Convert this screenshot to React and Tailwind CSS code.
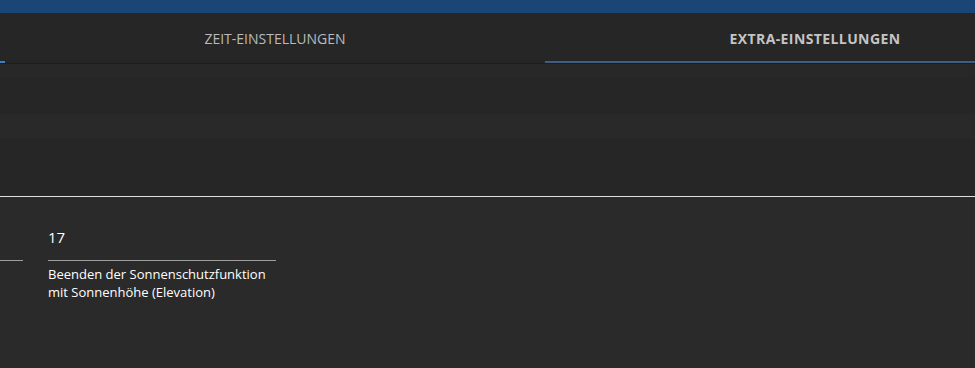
import React from "react";

const tabs = [
  { label: "", active: false, edge: true },
  { label: "ZEIT-EINSTELLUNGEN", active: false },
  { label: "EXTRA-EINSTELLUNGEN", active: true },
];

const App = () => {
  return (
    <div className="min-h-[368px] w-[975px] overflow-hidden bg-[#2a2a2a] font-['Open_Sans',sans-serif]">
      {/* Top bar */}
      <div className="h-[13px] bg-[#1a4577]" />

      {/* Tabs */}
      <div className="flex h-[51px] overflow-hidden border-b border-[#1d1d1d] bg-[#262626]">
        <div className="-ml-[535px] flex shrink-0">
          {tabs.map((tab, idx) => (
            <div
              key={idx}
              className={`flex h-[50px] w-[540px] shrink-0 items-center justify-center border-b-2 pt-[2px] text-[14px] ${
                tab.active
                  ? "border-[#3e5d82] font-bold tracking-[0.4px] text-[#c4c4c4]"
                  : tab.edge
                  ? "border-[#3b7fc4] font-medium text-[#b8b8b8]"
                  : "border-transparent font-medium text-[#bababa]"
              }`}
            >
              {tab.label}
            </div>
          ))}
        </div>
      </div>

      {/* Empty sections */}
      <div className="h-[13px] bg-[#282828]" />
      <div className="h-[37px] bg-[#262626]" />
      <div className="h-[25px] bg-[#292929]" />
      <div className="h-[58px] border-b border-[#dedede] bg-[#262626]" />

      {/* Inputs */}
      <div className="flex gap-[25px] pt-[28px]">
        <div className="-ml-[205px] w-[228px]">
          <div className="h-[36px] border-b border-[#9e9e9e]" />
        </div>
        <div className="w-[228px]">
          <div className="h-[36px] border-b border-[#9e9e9e] pt-[1px] text-[15px] leading-[22px] text-white">
            17
          </div>
          <div className="mt-[4px] text-[13px] leading-[18px] text-white">
            <div>Beenden der Sonnenschutzfunktion</div>
            <div>mit Sonnenhöhe (Elevation)</div>
          </div>
        </div>
      </div>
    </div>
  );
};

export default App;
